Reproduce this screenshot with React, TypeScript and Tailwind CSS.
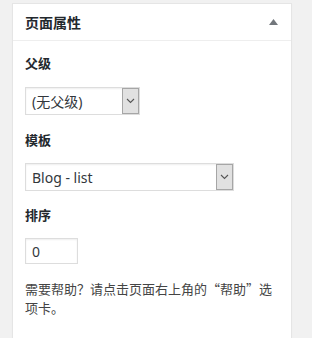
const FONT = "font-['Noto_Sans','Noto_Sans_CJK_SC',sans-serif]"

const Chevron = () => (
  <svg width="9" height="6" viewBox="0 0 9 6" className="block">
    <path d="M1 1 L4.5 4.5 L8 1" fill="none" stroke="#555" strokeWidth="1.1" />
  </svg>
)

const SelectBox = ({ value, width }: { value: string; width: string }) => (
  <div
    className={`flex h-[28px] ${width} items-stretch border border-[#dddddd] bg-white shadow-[inset_0_1px_2px_rgba(0,0,0,0.07)]`}
  >
    <span className="flex flex-1 items-center pl-[6px] text-[14px] text-[#32373c]">
      {value}
    </span>
    <span className="flex w-[17px] items-center justify-center border border-[#a6a6a6] bg-[#e1e1e1]">
      <Chevron />
    </span>
  </div>
)

const Label = ({ children }: { children: string }) => (
  <p className="text-[13px] font-bold leading-[20px] text-[#23282d]">{children}</p>
)

const App = () => {
  return (
    <div className={`min-h-[338px] bg-[#f1f1f1] pl-[12px] pt-[3px] ${FONT}`}>
      <div className="w-[280px] border border-[#e5e5e5] bg-white shadow-[0_1px_1px_rgba(0,0,0,0.04)]">
        <div className="flex h-[37px] items-center justify-between border-b border-[#eeeeee] pl-[12px] pr-[13px]">
          <h2 className="text-[14px] font-bold text-[#23282d]">页面属性</h2>
          <svg width="9" height="6" viewBox="0 0 9 6">
            <path d="M4.5 0 L9 6 L0 6 Z" fill="#72777c" />
          </svg>
        </div>
        <div className="px-[12px] pb-[12px]">
          <div className="mt-[12px]">
            <Label>父级</Label>
          </div>
          <div className="mt-[14px]">
            <SelectBox value="(无父级)" width="w-[115px]" />
          </div>
          <div className="mt-[15px]">
            <Label>模板</Label>
          </div>
          <div className="mt-[13px]">
            <SelectBox value="Blog - list" width="w-[209px]" />
          </div>
          <div className="mt-[14px]">
            <Label>排序</Label>
          </div>
          <div className="mt-[13px] flex h-[26px] w-[53px] items-center border border-[#dddddd] pl-[6px] text-[14px] text-[#32373c] shadow-[inset_0_1px_2px_rgba(0,0,0,0.07)]">
            0
          </div>
          <p className="mb-[11px] mt-[15px] font-['Noto_Sans_CJK_SC',sans-serif] text-[13px] leading-[19px] text-[#444444]">
            需要帮助？请点击页面右上角的“帮助”选项卡。
          </p>
        </div>
      </div>
    </div>
  )
}

export default App
